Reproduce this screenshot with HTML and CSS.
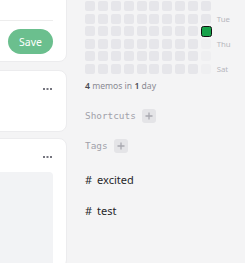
FILE: index.html
```html
<!DOCTYPE html>
<html lang="en">
  <head>
    <meta charset="UTF-8" />
    <meta name="viewport" content="width=device-width, initial-scale=1.0" />
    <title>memos</title>
    <link rel="stylesheet" href="styles.css">
  </head>

  <body>
    <div class="page">
      <div class="main">
        <div class="card editor">
          <div class="editor-input"></div>
          <div class="editor-tools">
            <button class="save">Save</button>
          </div>
        </div>

        <div class="card memo">
          <div class="memo-header">
            <svg class="more" width="9" height="2" viewBox="0 0 9 2"><rect x="0" y="0" width="2" height="2"/><rect x="3.5" y="0" width="2" height="2"/><rect x="7" y="0" width="2" height="2"/></svg>
          </div>
        </div>

        <div class="card memo last">
          <div class="memo-header">
            <svg class="more" width="9" height="2" viewBox="0 0 9 2"><rect x="0" y="0" width="2" height="2"/><rect x="3.5" y="0" width="2" height="2"/><rect x="7" y="0" width="2" height="2"/></svg>
          </div>
          <div class="memo-resource"></div>
        </div>
      </div>

      <aside class="sidebar">
        <div class="heatmap">
          <i></i><i></i><i></i><i></i><i></i><i></i><i></i>
          <i></i><i></i><i></i><i></i><i></i><i></i><i></i>
          <i></i><i></i><i></i><i></i><i></i><i></i><i></i>
          <i></i><i></i><i></i><i></i><i></i><i></i><i></i>
          <i></i><i></i><i></i><i></i><i></i><i></i><i></i>
          <i></i><i></i><i></i><i></i><i></i><i></i><i></i>
          <i></i><i></i><i></i><i></i><i></i><i></i><i></i>
          <i></i><i></i><i></i><i></i><i></i><i></i><i></i>
          <i></i><i></i><i></i><i></i><i></i><i></i><i></i>
          <i></i><i></i><i></i><i class="today"></i><i class="future"></i><i class="future"></i><i class="future"></i>
          <span></span><span></span><span>Tue</span><span></span><span>Thu</span><span></span><span>Sat</span>
        </div>

        <p class="stats"><b>4</b> memos in <b>1</b> day</p>

        <div class="section shortcuts">
          <span class="section-title">Shortcuts</span>
          <span class="add"><svg width="8" height="8" viewBox="0 0 8 8"><path d="M4 0.5v7M0.5 4h7"/></svg></span>
        </div>

        <div class="section">
          <span class="section-title">Tags</span>
          <span class="add"><svg width="8" height="8" viewBox="0 0 8 8"><path d="M4 0.5v7M0.5 4h7"/></svg></span>
        </div>

        <ul class="tags">
          <li><span class="hash">#</span>excited</li>
          <li><span class="hash">#</span>test</li>
        </ul>
      </aside>
    </div>
  </body>
</html>
```

FILE: styles.css
```css
body {
  margin: 0;
  overflow: hidden;
  background-color: #f4f4f5;
  font-family: "Noto Sans", sans-serif;
}

.page {
  display: flex;
  flex-flow: row nowrap;
  margin-top: -11.6px;
}

.main {
  flex-shrink: 0;
  width: 260px;
  margin-left: -193px;
  margin-top: -40.4px;
}

.card {
  box-sizing: border-box;
  background-color: #fff;
  border: 1px solid #ececee;
  border-radius: 8px;
  padding: 11px 13px 7px 12px;
}

.editor-input {
  height: 60px;
  border-bottom: 1px solid #ededed;
}

.editor-tools {
  display: flex;
  justify-content: flex-end;
  padding-top: 8px;
}

.save {
  width: 45px;
  height: 25px;
  border: none;
  border-radius: 13px;
  background-color: #6bbf8e;
  color: #fff;
  font-family: "Noto Sans", sans-serif;
  font-size: 10.5px;
  padding: 0;
}

.memo {
  margin-top: 8px;
  min-height: 62px;
  padding: 17px 13px 0 12px;
}

.memo.last {
  margin-top: 6px;
  height: 130px;
}

.memo-header {
  display: flex;
  justify-content: flex-end;
  height: 2px;
  padding-right: 1px;
}

.more {
  fill: #75757e;
  display: block;
}

.memo-resource {
  margin-top: 14px;
  height: 100px;
  background-color: #f2f3f5;
  border-radius: 4px;
}

.sidebar {
  padding-left: 18px;
}

.heatmap {
  display: grid;
  grid-template-columns: repeat(10, 10px) auto;
  grid-template-rows: repeat(7, 10px);
  grid-auto-flow: column;
  column-gap: 2.9px;
  row-gap: 2.6px;
}

.heatmap i {
  display: block;
  border-radius: 2px;
  background-color: #e6e6ea;
}

.heatmap i.future {
  background-color: #efeff1;
}

.heatmap i.today {
  box-sizing: border-box;
  width: 11px;
  height: 11px;
  margin: -0.5px;
  background-color: #17a24a;
  border: 1px solid #111;
  border-radius: 2.5px;
}

.heatmap span {
  padding-left: 2.8px;
  font-size: 7.8px;
  line-height: 10px;
  color: #b6b6bd;
}

.stats {
  margin: 6px 0 0;
  font-size: 8.6px;
  line-height: 12px;
  color: #8a8a93;
}

.stats b {
  font-weight: 600;
  color: #4a4a52;
}

.section {
  display: flex;
  align-items: center;
  height: 14px;
  gap: 6.5px;
  margin-top: 16px;
}

.section.shortcuts {
  margin-top: 17px;
}

.section-title {
  font-family: "DejaVu Sans Mono", monospace;
  font-size: 9.4px;
  color: #a1a1aa;
}

.add {
  display: flex;
  align-items: center;
  justify-content: center;
  width: 14px;
  height: 14px;
  border-radius: 3px;
  background-color: #e4e4e7;
}

.add svg {
  stroke: #a8a8b0;
  stroke-width: 1.3;
}

.tags {
  list-style: none;
  margin: 19.2px 0 0;
  padding: 0;
}

.tags li {
  font-size: 11px;
  line-height: 16px;
  color: #27272a;
  margin-bottom: 15px;
}

.hash {
  margin-right: 5px;
}
```
